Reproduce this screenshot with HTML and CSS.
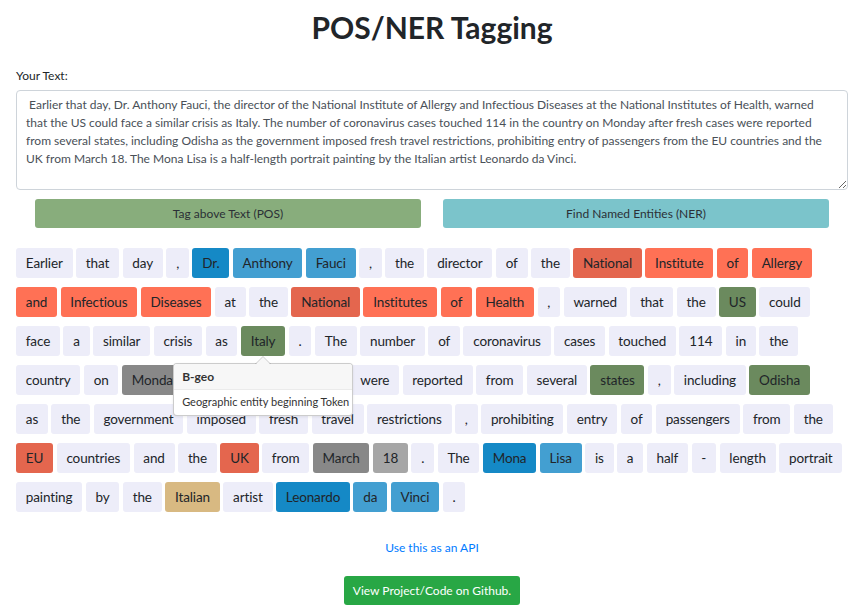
FILE: index.html
```html
<!DOCTYPE html>
<html lang="en">
<head>
<meta charset="utf-8">
<title>POS/NER Tagging</title>
<link rel="stylesheet" href="styles.css">
</head>
<body>
<div class="page">
  <h1 class="title">POS/NER Tagging</h1>
  <label class="label" for="txt">Your Text:</label>
  <textarea id="txt" class="input"> Earlier that day, Dr. Anthony Fauci, the director of the National Institute of Allergy and Infectious Diseases at the National Institutes of Health, warned that the US could face a similar crisis as Italy. The number of coronavirus cases touched 114 in the country on Monday after fresh cases were reported from several states, including Odisha as the government imposed fresh travel restrictions, prohibiting entry of passengers from the EU countries and the UK from March 18. The Mona Lisa is a half-length portrait painting by the Italian artist Leonardo da Vinci.</textarea>
  <div class="actions">
    <button class="btn btn-pos">Tag above Text (POS)</button>
    <button class="btn btn-ner">Find Named Entities (NER)</button>
  </div>
  <div class="tokens">
    <span class="t">Earlier</span><span class="t">that</span><span class="t">day</span><span class="t">,</span><span class="t b-per">Dr.</span><span class="t i-per">Anthony</span><span class="t i-per">Fauci</span><span class="t">,</span><span class="t">the</span><span class="t">director</span><span class="t">of</span><span class="t">the</span><span class="t b-org">National</span><span class="t i-org">Institute</span><span class="t i-org">of</span><span class="t i-org">Allergy</span>
    <span class="br"></span>
    <span class="t i-org">and</span><span class="t i-org">Infectious</span><span class="t i-org">Diseases</span><span class="t">at</span><span class="t">the</span><span class="t b-org">National</span><span class="t i-org">Institutes</span><span class="t i-org">of</span><span class="t i-org">Health</span><span class="t">,</span><span class="t">warned</span><span class="t">that</span><span class="t">the</span><span class="t geo">US</span><span class="t">could</span>
    <span class="br"></span>
    <span class="t">face</span><span class="t">a</span><span class="t">similar</span><span class="t">crisis</span><span class="t">as</span><span class="t geo has-pop">Italy<span class="popover"><span class="pop-head">B-geo</span><span class="pop-body">Geographic entity beginning Token</span></span></span><span class="t">.</span><span class="t">The</span><span class="t">number</span><span class="t">of</span><span class="t">coronavirus</span><span class="t">cases</span><span class="t">touched</span><span class="t">114</span><span class="t">in</span><span class="t">the</span>
    <span class="br"></span>
    <span class="t">country</span><span class="t">on</span><span class="t tim">Monday</span><span class="t">after</span><span class="t">fresh</span><span class="t">cases</span><span class="t">were</span><span class="t">reported</span><span class="t">from</span><span class="t">several</span><span class="t geo">states</span><span class="t">,</span><span class="t">including</span><span class="t geo">Odisha</span>
    <span class="br"></span>
    <span class="t">as</span><span class="t">the</span><span class="t">government</span><span class="t">imposed</span><span class="t">fresh</span><span class="t">travel</span><span class="t">restrictions</span><span class="t">,</span><span class="t">prohibiting</span><span class="t">entry</span><span class="t">of</span><span class="t">passengers</span><span class="t">from</span><span class="t">the</span>
    <span class="br"></span>
    <span class="t b-org">EU</span><span class="t">countries</span><span class="t">and</span><span class="t">the</span><span class="t b-org">UK</span><span class="t">from</span><span class="t tim">March</span><span class="t tim2">18</span><span class="t">.</span><span class="t">The</span><span class="t b-per">Mona</span><span class="t i-per">Lisa</span><span class="t">is</span><span class="t">a</span><span class="t">half</span><span class="t">-</span><span class="t">length</span><span class="t">portrait</span>
    <span class="br"></span>
    <span class="t">painting</span><span class="t">by</span><span class="t">the</span><span class="t gpe">Italian</span><span class="t">artist</span><span class="t b-per">Leonardo</span><span class="t i-per">da</span><span class="t i-per">Vinci</span><span class="t">.</span>
  </div>
  <div class="footer">
    <a class="api-link" href="#">Use this as an API</a>
    <a class="btn-github" href="#">View Project/Code on Github.</a>
  </div>
</div>
</body>
</html>
```

FILE: styles.css
```css
html, body {
  margin: 0;
  padding: 0;
  background: #ffffff;
}
body {
  font-family: Lato, "Open Sans", "Liberation Sans", sans-serif;
  color: #212529;
}
.page {
  padding: 0 16px;
}
.title {
  margin: 7px 0 0;
  font-size: 30px;
  line-height: 40px;
  font-weight: 700;
  text-align: center;
  color: #212529;
}
.label {
  display: block;
  margin-top: 21px;
  font-size: 12px;
  line-height: 16px;
}
.input {
  display: block;
  box-sizing: border-box;
  width: 100%;
  height: 100px;
  margin-top: 6px;
  padding: 5px 10px 5px 9px;
  border: 1px solid #ced4da;
  border-radius: 4px;
  font-family: inherit;
  font-size: 12px;
  line-height: 18px;
  color: #495057;
  resize: vertical;
  background: #fff;
}
.actions {
  display: grid;
  grid-template-columns: 1fr 1fr;
  column-gap: 22px;
  padding: 0 19px;
  margin-top: 9px;
}
.btn {
  height: 29px;
  border: none;
  border-radius: 3px;
  font-family: inherit;
  font-size: 12px;
  color: #2b3036;
  cursor: pointer;
}
.btn-pos { background: #88ad7c; }
.btn-ner { background: #7bc4cb; }
.tokens {
  display: flex;
  flex-wrap: wrap;
  column-gap: 3.5px;
  margin-top: 20px;
}
.br {
  flex-basis: 100%;
  height: 0;
}
.t {
  position: relative;
  display: inline-block;
  margin-bottom: 9px;
  padding: 5px 9.8px;
  font-size: 13.5px;
  letter-spacing: -0.12px;
  line-height: 20px;
  border-radius: 3px;
  background: #ededf9;
  color: #212529;
}
.b-per { background: #1589c6; }
.i-per { background: #439fd1; }
.b-org { background: #e4664e; }
.i-org { background: #ff7155; }
.geo { background: #6b8a5e; }
.tim { background: #888888; }
.tim2 { background: #a6a6a6; }
.gpe { background: #d8b982; }
.popover {
  position: absolute;
  z-index: 5;
  top: calc(100% + 7px);
  left: 50%;
  transform: translateX(-50%);
  width: 180px;
  box-sizing: border-box;
  background: #fff;
  border: 1px solid rgba(0, 0, 0, 0.2);
  border-radius: 4px;
  box-shadow: 0 1px 3px rgba(0, 0, 0, 0.08);
  text-align: left;
  letter-spacing: 0;
}
.popover::before,
.popover::after {
  content: "";
  position: absolute;
  left: 50%;
  transform: translateX(-50%);
  width: 0;
  height: 0;
  border-style: solid;
}
.popover::before {
  top: -8px;
  border-width: 0 8px 8px 8px;
  border-color: transparent transparent rgba(0, 0, 0, 0.2) transparent;
}
.popover::after {
  top: -7px;
  border-width: 0 7px 7px 7px;
  border-color: transparent transparent #f7f7f7 transparent;
}
.pop-head {
  display: block;
  padding: 5px 8px;
  font-size: 12px;
  line-height: 15px;
  font-weight: 700;
  color: #333;
  background: #f7f7f7;
  border-bottom: 1px solid #ebebeb;
  border-radius: 3px 3px 0 0;
}
.pop-body {
  display: block;
  padding: 5px 8px 6px;
  font-size: 11px;
  line-height: 14px;
  color: #333;
  white-space: nowrap;
}
.footer {
  display: flex;
  flex-direction: column;
  align-items: center;
  margin-top: 18px;
}
.api-link {
  font-size: 12px;
  line-height: 18px;
  color: #007bff;
  text-decoration: none;
}
.btn-github {
  margin-top: 19px;
  display: block;
  width: 176px;
  height: 29px;
  line-height: 29px;
  text-align: center;
  font-size: 12px;
  color: #fff;
  background: #28a745;
  border-radius: 3px;
  text-decoration: none;
}
```
